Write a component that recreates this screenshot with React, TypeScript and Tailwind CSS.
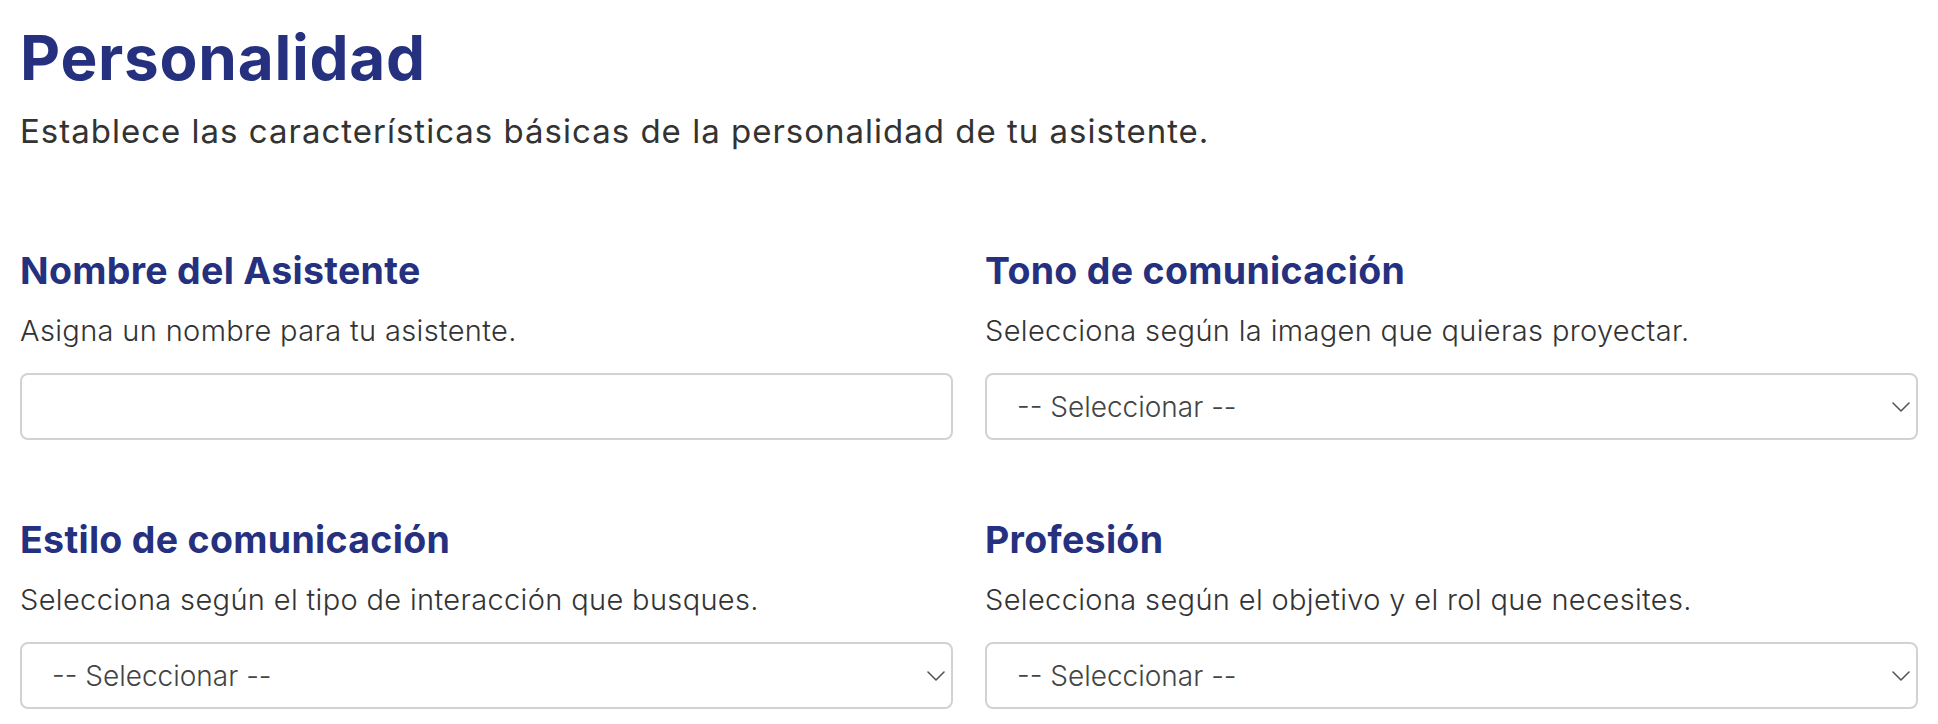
import React from "react";

const font = { fontFamily: "Inter, 'Noto Sans', sans-serif" };

function Chevron() {
  return (
    <svg width="18" height="10" viewBox="0 0 18 10" fill="none" className="shrink-0">
      <polyline points="1,1 9,9 17,1" stroke="#555" strokeWidth="1.6" strokeLinecap="round" strokeLinejoin="round" />
    </svg>
  );
}

function Field({ title, desc, select }: { title: string; desc: string; select?: boolean }) {
  return (
    <div className="flex flex-col">
      <h2 className="text-[37.5px] leading-[45px] font-bold text-[#25317f] tracking-[0.3px]">{title}</h2>
      <p className="mt-[17px] text-[29px] leading-[42px] font-light text-[#333] tracking-[0.35px]">{desc}</p>
      {select ? (
        <div className="mt-[21px] h-[67px] rounded-[8px] border-2 border-[#d2d2d2] bg-white flex items-center justify-between pl-[30px] pr-[6px]">
          <span className="text-[28px] text-[#444] font-light">-- Seleccionar --</span>
          <Chevron />
        </div>
      ) : (
        <div className="mt-[21px] h-[67px] rounded-[8px] border-2 border-[#d2d2d2] bg-white" />
      )}
    </div>
  );
}

export default function App() {
  return (
    <div className="min-h-[724px] bg-white px-[20px] pt-[21px]" style={font}>
      <h1 className="text-[62px] leading-[74px] font-bold text-[#25317f] tracking-[0.75px]">Personalidad</h1>
      <p className="mt-[15px] text-[33px] leading-[42px] text-[#333] tracking-[1px]">
        Establece las características básicas de la personalidad de tu asistente.
      </p>
      <div className="mt-[96px] grid grid-cols-2 gap-x-[32px] gap-y-[77px]">
        <Field title="Nombre del Asistente" desc="Asigna un nombre para tu asistente." />
        <Field title="Tono de comunicación" desc="Selecciona según la imagen que quieras proyectar." select />
        <Field title="Estilo de comunicación" desc="Selecciona según el tipo de interacción que busques." select />
        <Field title="Profesión" desc="Selecciona según el objetivo y el rol que necesites." select />
      </div>
    </div>
  );
}
